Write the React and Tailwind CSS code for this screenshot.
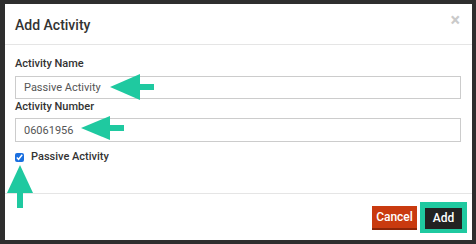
import { useState } from "react";

export default function App() {
  const [name, setName] = useState("Passive Activity");
  const [number, setNumber] = useState("06061956");
  const [passive, setPassive] = useState(true);

  return (
    <div className="relative w-[476px] h-[244px] bg-[#2e2e2e] pt-[4px] pl-[5px] overflow-hidden" style={{ fontFamily: "Roboto, 'Liberation Sans', sans-serif" }}>
      <div className="w-[467px] h-[236px] bg-white flex flex-col">
        {/* Header */}
        <div className="h-[41px] border-b border-[#e5e5e5] flex items-center justify-between pl-[10px] pr-[12px]">
          <h2 className="text-[14px] font-medium text-[#333] leading-none mt-[1px]">Add Activity</h2>
          <span className="text-[18px] font-bold text-[#cacaca] leading-none -mt-[8px]">×</span>
        </div>

        {/* Body */}
        <div className="flex-1 pl-[10px] pr-[11px] pt-[12px]">
          <label className="block text-[11px] font-medium text-[#333] leading-[14px] mb-[5px]">Activity Name</label>
          <input value={name} onChange={e => setName(e.target.value)}
            className="block w-full h-[23px] border border-[#cccccc] px-[8px] text-[11px] text-[#555] outline-none" />
          <label className="block text-[11px] font-medium text-[#333] leading-[14px] mt-[1px] mb-[4px]">Activity Number</label>
          <input value={number} onChange={e => setNumber(e.target.value)}
            className="block w-full h-[24px] border border-[#cccccc] px-[8px] text-[11px] text-[#555] outline-none" />
          <label className="flex items-center gap-[7px] mt-[8px] text-[11px] font-medium text-[#333] leading-[14px]">
            <input type="checkbox" checked={passive} onChange={e => setPassive(e.target.checked)}
              className="w-[9px] h-[9px] m-0 accent-[#1a6fe0]" />
            Passive Activity
          </label>
        </div>

        {/* Footer */}
        <div className="h-[47px] border-t border-[#e5e5e5] flex items-center justify-end pr-[5px] gap-[3px]">
          <button className="h-[24px] w-[45px] bg-[#c93a0f] border-b-2 border-[#8a2508] text-white text-[12px] font-medium leading-none mt-[1px]">Cancel</button>
          <div className="border-[5px] border-t-[6px] border-b-[4px] border-[#1fc9a0]">
            <button className="h-[21px] w-[37px] bg-[#222] text-white text-[12px] font-medium leading-none block">Add</button>
          </div>
        </div>
      </div>

      {/* Annotation arrows */}
      <svg className="absolute top-0 left-0 pointer-events-none" width="476" height="244" viewBox="0 0 476 244">
        <g fill="#1fc9a0">
          <polygon points="110,87 140,74 140,100" />
          <rect x="138" y="84" width="16" height="6" />
          <polygon points="81,128 110,116 110,140" />
          <rect x="108" y="125" width="16" height="6" />
          <polygon points="20,165 7,193 33,193" />
          <rect x="17" y="191" width="6" height="17" />
        </g>
      </svg>
    </div>
  );
}
